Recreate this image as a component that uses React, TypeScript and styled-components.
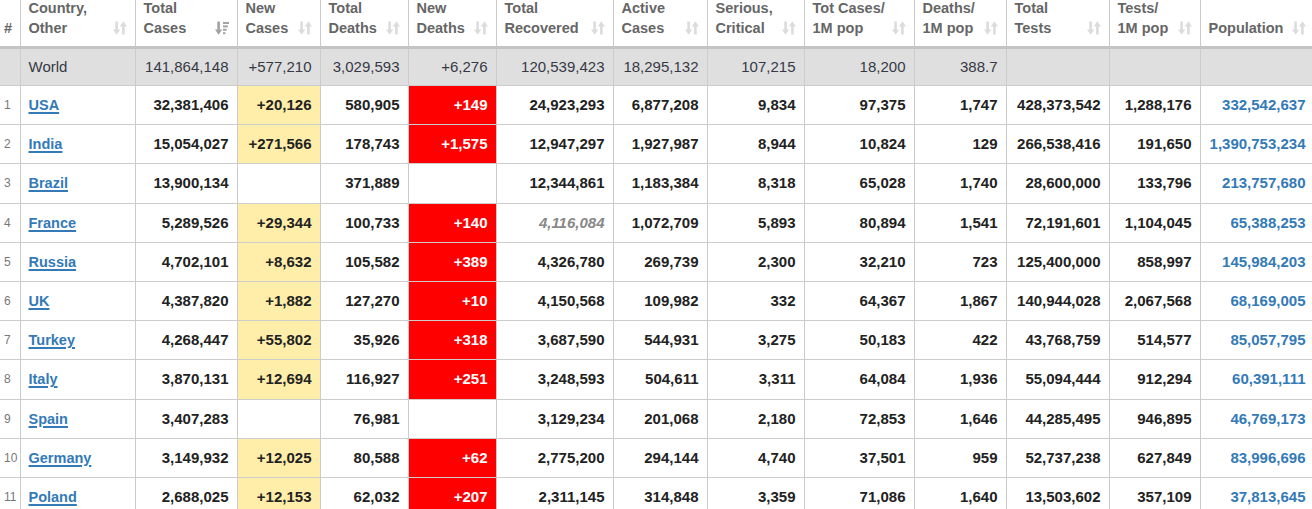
import styled, { createGlobalStyle } from "styled-components";

const GlobalStyle = createGlobalStyle`
  html, body {
    margin: 0;
    padding: 0;
    background: #fff;
  }
  body {
    font-family: "Liberation Sans", Arial, sans-serif;
    overflow: hidden;
  }
`;

const Wrapper = styled.div`
  width: 1312px;
  height: 509px;
  overflow: hidden;
`;

const Table = styled.table`
  width: 1314px;
  margin-top: -2px;
  border-collapse: collapse;
  table-layout: fixed;
  font-family: "Liberation Sans", Arial, sans-serif;
`;

const HeadCell = styled.th`
  padding: 0 8px 8px 8px;
  text-align: left;
  vertical-align: bottom;
  font-size: 14.5px;
  line-height: 20px;
  font-weight: bold;
  color: #666;
  border-left: 1px solid #ccc;
  border-bottom: 3px solid #c4c4c4;
  &:first-child {
    border-left: none;
    padding: 0 4px 8px 4px;
  }
`;

const HeadInner = styled.div`
  display: flex;
  align-items: flex-end;
  justify-content: space-between;
  gap: 4px;
`;

const SortWrap = styled.span`
  display: flex;
  flex: 0 0 auto;
  margin-bottom: 3px;
`;

const Row = styled.tr<{ $world?: boolean }>`
  height: ${(p) => (p.$world ? "38px" : "39.2px")};
  background: ${(p) => (p.$world ? "#dfdfdf" : "#fff")};
`;

type Kind = "rank" | "country" | "num" | "newCases" | "newDeaths" | "pop" | "world";

const Cell = styled.td<{ $kind: Kind; $filled?: boolean; $muted?: boolean }>`
  padding: 0 8px;
  border: 1px solid #ccc;
  border-top: none;
  font-size: 15px;
  line-height: 18px;
  white-space: nowrap;
  overflow: hidden;
  text-align: ${(p) => (p.$kind === "rank" || p.$kind === "country" ? "left" : "right")};
  font-weight: ${(p) => (p.$kind === "world" || p.$kind === "rank" ? "normal" : "bold")};
  font-style: ${(p) => (p.$muted ? "italic" : "normal")};
  color: ${(p) =>
    p.$muted
      ? "#888"
      : p.$kind === "pop"
      ? "#337ab7"
      : p.$kind === "newDeaths" && p.$filled
      ? "#fff"
      : p.$kind === "world"
      ? "#363945"
      : "#222"};
  background: ${(p) =>
    p.$kind === "newCases" && p.$filled
      ? "#ffeeaa"
      : p.$kind === "newDeaths" && p.$filled
      ? "#ff0000"
      : "transparent"};
  &:first-child {
    border-left: none;
    padding: 0 4px;
    font-size: 12px;
    color: #777;
  }
`;

const CountryLink = styled.a`
  color: #337ab7;
  font-weight: bold;
  font-size: 14.5px;
  text-decoration: underline;
  text-underline-offset: 2px;
  text-decoration-thickness: 2px;
`;

const WorldName = styled.span`
  font-size: 15px;
  font-weight: normal;
  color: #363945;
`;

function SortIcon({ active }: { active?: boolean }) {
  const c = active ? "#a3a3a3" : "#dcdcdc";
  return (
    <SortWrap>
      <svg width="14" height="14" viewBox="0 0 14 14">
        <rect x="2.3" y="0.5" width="2.6" height="9" fill={c} />
        <polygon points="0,8.5 7.2,8.5 3.6,13.8" fill={c} />
        {active ? (
          <>
            <rect x="8" y="1" width="6" height="2" fill={c} />
            <rect x="8" y="4.4" width="4.8" height="2" fill={c} />
            <rect x="8" y="7.8" width="3.6" height="2" fill={c} />
            <rect x="8" y="11.2" width="2.4" height="2" fill={c} />
          </>
        ) : (
          <>
            <rect x="9.1" y="4.5" width="2.6" height="9" fill={c} />
            <polygon points="6.8,5.5 14,5.5 10.4,0.2" fill={c} />
          </>
        )}
      </svg>
    </SortWrap>
  );
}

const widths = [20, 115, 102, 83, 88, 88, 117, 94, 97, 110, 92, 103, 91, 114];

const headers: { lines: string[]; active?: boolean; icon?: boolean }[] = [
  { lines: ["#"], icon: false },
  { lines: ["Country,", "Other"] },
  { lines: ["Total", "Cases"], active: true },
  { lines: ["New", "Cases"] },
  { lines: ["Total", "Deaths"] },
  { lines: ["New", "Deaths"] },
  { lines: ["Total", "Recovered"] },
  { lines: ["Active", "Cases"] },
  { lines: ["Serious,", "Critical"] },
  { lines: ["Tot Cases/", "1M pop"] },
  { lines: ["Deaths/", "1M pop"] },
  { lines: ["Total", "Tests"] },
  { lines: ["Tests/", "1M pop"] },
  { lines: ["Population"] },
];

const world = [
  "141,864,148",
  "+577,210",
  "3,029,593",
  "+6,276",
  "120,539,423",
  "18,295,132",
  "107,215",
  "18,200",
  "388.7",
  "",
  "",
  "",
];

const rows: string[][] = [
  ["USA", "32,381,406", "+20,126", "580,905", "+149", "24,923,293", "6,877,208", "9,834", "97,375", "1,747", "428,373,542", "1,288,176", "332,542,637"],
  ["India", "15,054,027", "+271,566", "178,743", "+1,575", "12,947,297", "1,927,987", "8,944", "10,824", "129", "266,538,416", "191,650", "1,390,753,234"],
  ["Brazil", "13,900,134", "", "371,889", "", "12,344,861", "1,183,384", "8,318", "65,028", "1,740", "28,600,000", "133,796", "213,757,680"],
  ["France", "5,289,526", "+29,344", "100,733", "+140", "4,116,084", "1,072,709", "5,893", "80,894", "1,541", "72,191,601", "1,104,045", "65,388,253"],
  ["Russia", "4,702,101", "+8,632", "105,582", "+389", "4,326,780", "269,739", "2,300", "32,210", "723", "125,400,000", "858,997", "145,984,203"],
  ["UK", "4,387,820", "+1,882", "127,270", "+10", "4,150,568", "109,982", "332", "64,367", "1,867", "140,944,028", "2,067,568", "68,169,005"],
  ["Turkey", "4,268,447", "+55,802", "35,926", "+318", "3,687,590", "544,931", "3,275", "50,183", "422", "43,768,759", "514,577", "85,057,795"],
  ["Italy", "3,870,131", "+12,694", "116,927", "+251", "3,248,593", "504,611", "3,311", "64,084", "1,936", "55,094,444", "912,294", "60,391,111"],
  ["Spain", "3,407,283", "", "76,981", "", "3,129,234", "201,068", "2,180", "72,853", "1,646", "44,285,495", "946,895", "46,769,173"],
  ["Germany", "3,149,932", "+12,025", "80,588", "+62", "2,775,200", "294,144", "4,740", "37,501", "959", "52,737,238", "627,849", "83,996,696"],
  ["Poland", "2,688,025", "+12,153", "62,032", "+207", "2,311,145", "314,848", "3,359", "71,086", "1,640", "13,503,602", "357,109", "37,813,645"],
];

function kindFor(i: number): Kind {
  if (i === 1) return "newCases";
  if (i === 3) return "newDeaths";
  if (i === 11) return "pop";
  return "num";
}

export default function App() {
  return (
    <Wrapper>
      <GlobalStyle />
      <Table>
        <colgroup>
          {widths.map((w, i) => (
            <col key={i} style={{ width: w }} />
          ))}
        </colgroup>
        <thead>
          <tr>
            {headers.map((h, i) => (
              <HeadCell key={i}>
                <HeadInner>
                  <span>
                    {h.lines.map((l, j) => (
                      <div key={j}>{l}</div>
                    ))}
                  </span>
                  {h.icon !== false && <SortIcon active={h.active} />}
                </HeadInner>
              </HeadCell>
            ))}
          </tr>
        </thead>
        <tbody>
          <Row $world>
            <Cell $kind="rank"></Cell>
            <Cell $kind="world" style={{ textAlign: "left" }}>
              <WorldName>World</WorldName>
            </Cell>
            {world.map((v, i) => (
              <Cell key={i} $kind="world">
                {v}
              </Cell>
            ))}
          </Row>
          {rows.map((r, idx) => (
            <Row key={r[0]}>
              <Cell $kind="rank">{idx + 1}</Cell>
              <Cell $kind="country">
                <CountryLink href="#">{r[0]}</CountryLink>
              </Cell>
              {r.slice(1).map((v, i) => (
                <Cell
                  key={i}
                  $kind={kindFor(i)}
                  $filled={v !== ""}
                  $muted={r[0] === "France" && i === 4}
                >
                  {v}
                </Cell>
              ))}
            </Row>
          ))}
        </tbody>
      </Table>
    </Wrapper>
  );
}
